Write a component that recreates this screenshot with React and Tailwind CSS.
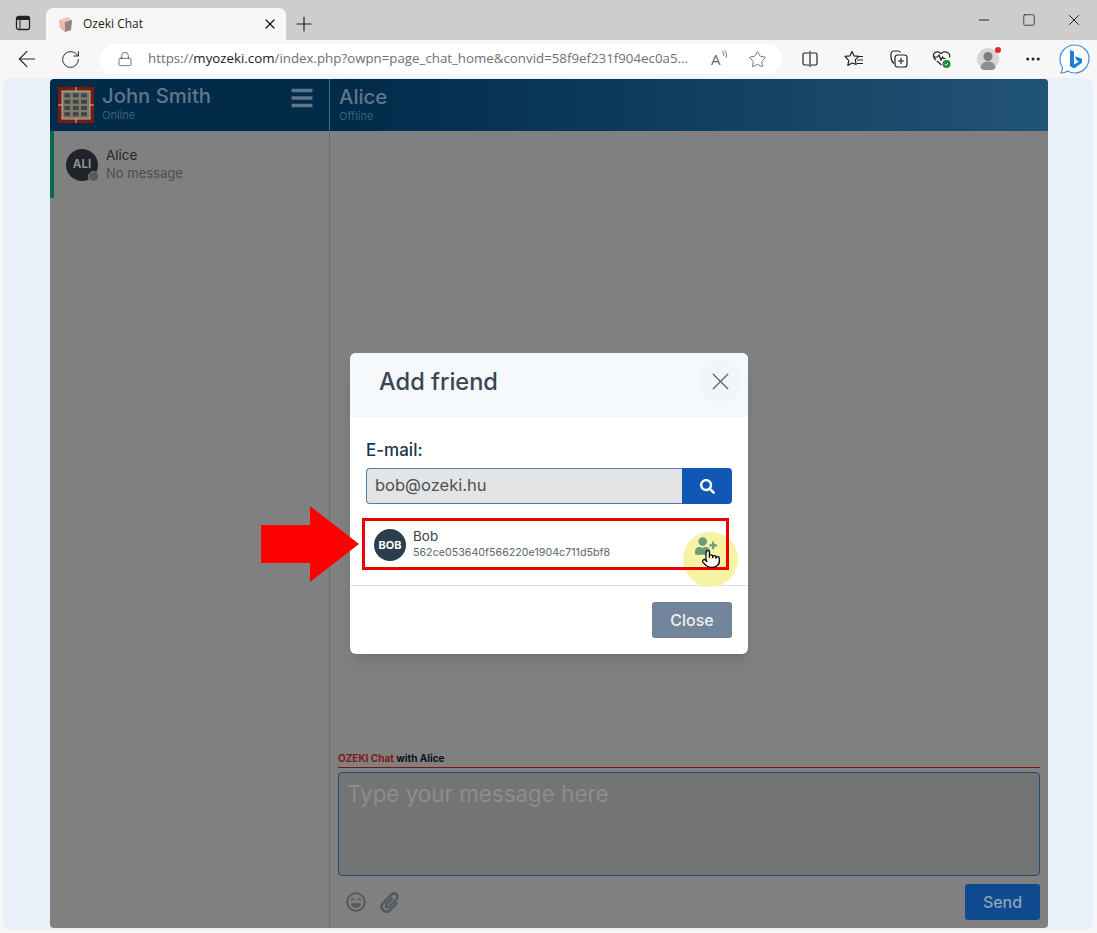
import { ArrowLeft, RotateCw, Lock, Star, Plus, X, Minus, Square, MoreHorizontal, Pointer } from "lucide-react";
import { FaBars, FaSearch, FaUserPlus, FaPaperclip, FaRegLaughBeam } from "react-icons/fa";

// Red keypad logo in the sidebar header
function KeypadLogo() {
  const cells = [0, 1, 2, 3];
  return (
    <svg width="36" height="36" viewBox="0 0 36 36" className="shrink-0">
      <rect width="36" height="36" fill="#7a1a0c" />
      <rect x="4" y="4" width="28" height="28" fill="#7a7a72" stroke="#b5aea5" strokeWidth="1" />
      {cells.map((r) =>
        [0, 1, 2].map((c) => (
          <rect key={`${r}-${c}`} x={6 + c * 8.4} y={6 + r * 6.3} width="6.6" height="4.8" fill="#45453f" stroke="#8f8c84" strokeWidth="0.5" />
        ))
      )}
      <path d="M18 0v4M18 32v4M0 18h4M32 18h4" stroke="#d8b8a8" strokeWidth="1" />
    </svg>
  );
}

function TabActionsIcon() {
  return (
    <svg width="16" height="16" viewBox="0 0 16 16" className="mb-[9px]" fill="none" stroke="#222" strokeWidth="1.300">
      <rect x="1.500" y="1.500" width="13" height="13" rx="2" />
      <path d="M1.500 3.500h13" strokeWidth="3" />
      <path d="M5 3v11" strokeWidth="1" />
    </svg>
  );
}

function TabIcon() {
  return (
    <svg width="17" height="17" viewBox="0 0 17 17">
      <path d="M2 4l9-3 4 3-1 10-6 2-5-4z" fill="#e8c9c4" />
      <path d="M8 6l7-2-1 10-6 2z" fill="#8f8580" />
      <path d="M2 4l6 2v10l-5-4z" fill="#f2b5a8" />
    </svg>
  );
}

function ReadAloudWaves() {
  return (
    <svg width="6" height="12" viewBox="0 0 6 12" fill="none" stroke="#777" strokeWidth="1" className="-mt-[6px]">
      <path d="M1 1c1.500 1 2 3 1.500 5M3.500 0c2 2 2.500 5 1.500 8" />
    </svg>
  );
}

function SplitIcon() {
  return (
    <svg width="18" height="18" viewBox="0 0 18 18" fill="none" stroke="#222" strokeWidth="1.2">
      <path d="M8 3H3.500A1.500 1.500 0 0 0 2 4.500v9A1.500 1.500 0 0 0 3.500 15H8M10 3h4.500A1.500 1.500 0 0 1 16 4.500v9a1.500 1.500 0 0 1-1.500 1.500H10M9 1v16" />
    </svg>
  );
}

function FavoritesIcon() {
  return (
    <svg width="20" height="18" viewBox="0 0 20 18" fill="none" stroke="#222" strokeWidth="1.2" strokeLinejoin="round">
      <path d="M8 1.500l2 4.400 4.800.5-3.600 3.200 1 4.800L8 13l-4.200 2.400 1-4.800L1 6.400l4.800-.5z" />
      <path d="M14 6.500h5M13 10h6M13 13.500h6" />
    </svg>
  );
}

function CollectionsIcon() {
  return (
    <svg width="20" height="20" viewBox="0 0 20 20" fill="none" stroke="#222" strokeWidth="1.2">
      <path d="M5 14.500C3 13 2 11 2 8V5a3 3 0 0 1 3-3h4a3 3 0 0 1 2.500 1.500" />
      <rect x="6" y="6" width="12" height="12" rx="2.500" />
      <path d="M12 9v6M9 12h6" />
    </svg>
  );
}

function HealthIcon() {
  return (
    <svg width="20" height="20" viewBox="0 0 20 20" className="-ml-[2px]">
      <path d="M4 11C1.500 9 1 7.500 1.500 5.500 2.500 2.500 6.500 2 9 4.500c2.500-2.500 7-2 8.500 1 .4 1 .4 2 0 3M1.500 8h4l1.500-2 2 5 1.500-3 1 1.500h2M5 12l4.500 4" fill="none" stroke="#222" strokeWidth="1.200" />
      <circle cx="14.500" cy="15" r="4" fill="#1e8a3c" />
      <path d="M12.800 15l1.200 1.200 2-2.200" fill="none" stroke="#fff" strokeWidth="1" />
    </svg>
  );
}

function ProfileIcon() {
  return (
    <div className="relative w-[22px] h-[22px]">
      <svg width="22" height="22" viewBox="0 0 22 22">
        <circle cx="11" cy="11" r="11" fill="#d6d6d6" />
        <circle cx="11" cy="8.500" r="4.500" fill="#7d7d7d" />
        <path d="M3.500 20c.5-4.500 3.500-6.500 7.500-6.500s7 2 7.500 6.500a11 11 0 0 1-15 0z" fill="#8e8e8e" />
      </svg>
      <span className="absolute -top-[1px] right-[-2px] w-[6px] h-[6px] rounded-full bg-[#e8262a]" />
    </div>
  );
}

function BingIcon() {
  return (
    <svg width="31" height="31" viewBox="0 0 31 31">
      <path d="M15.500 1C7.500 1 1 7.500 1 15.500c0 3.500 1 6 2.500 8 .3 1.500-.3 3.500-1.500 5.500 3 0 5-.8 6.500-2 2.200 1.300 4.700 2 7.500 2C23.500 29 30 22.500 30 14.500 30 7 23.500 1 15.500 1z" fill="#fff" stroke="#3f8fd8" strokeWidth="1.200" />
      <path d="M11 6l4 1.500v13l5-3-2.500-1.200-1.500-4 7 2.500v4L15 24.500l-4-2.500z" fill="#1b7fd6" />
    </svg>
  );
}

function Sidebar() {
  return (
    <aside className="w-[280px] shrink-0 flex flex-col border-r border-[#6e6e6e]">
      <div className="h-[52px] bg-[#022a49] flex items-center pl-[8px] pr-[16px] border-r border-[#4a6a80] -mr-px">
        <KeypadLogo />
        <div className="ml-[8px] flex-1 -mt-[6px]">
          <div className="text-[20.300px] leading-[26px] font-medium text-[#5f7789]">John Smith</div>
          <div className="text-[11px] leading-[13px] text-[#3e6078]">Online</div>
        </div>
        <FaBars className="text-[#5f7789] w-[22px] h-[24px] -mt-[14px]" />
      </div>
      <div className="h-[67px] bg-[#808080] border-l-[4px] border-[#0a6a4a] flex items-center pl-[12px]">
        <div className="relative w-[32px] h-[32px] rounded-full bg-[#20242a] flex items-center justify-center shrink-0">
          <span className="text-[11.500px] font-bold text-[#8b9096]">ALI</span>
          <span className="absolute right-[-1px] bottom-[-1px] w-[11px] h-[11px] rounded-full bg-[#555a61] border border-[#808080]" />
        </div>
        <div className="ml-[8px] -mt-[2px]">
          <div className="text-[13.500px] leading-[18px] text-[#24262a]">Alice</div>
          <div className="text-[13px] leading-[18px] text-[#4a4d52]">No message</div>
        </div>
      </div>
      <div className="flex-1 bg-[#808080]" />
    </aside>
  );
}

function ChatPane() {
  return (
    <main className="flex-1 flex flex-col min-w-0 bg-[#808080]">
      <div className="h-[52px] bg-gradient-to-r from-[#022a49] to-[#225475] pl-[9px] pt-[5px]">
        <div className="text-[20.300px] leading-[26px] font-medium text-[#5f7789]">Alice</div>
        <div className="text-[11px] leading-[13px] text-[#3e6078]">Offline</div>
      </div>
      <div className="flex-1" />
      <div className="px-[8px] pb-[8px]">
        <div className="text-[10px] leading-[13px] font-bold border-b border-[#7a1510] pb-[2px]">
          <span className="text-[#7c1a14]">OZEKI Chat</span> <span className="text-[#111]">with Alice</span>
        </div>
        <div className="mt-[4px] h-[104px] rounded-[4px] border border-[#1f4a75] bg-[#747474] px-[8px] py-[4px] text-[22.400px] leading-[34px] text-[#8b8d8e]">
          Type your message here
        </div>
        <div className="mt-[8px] flex items-center justify-between">
          <div className="flex items-center gap-[14px] pl-[8px] text-[#55595e]">
            <FaRegLaughBeam className="w-[20px] h-[20px]" />
            <FaPaperclip className="w-[19px] h-[21px]" />
          </div>
          <button className="w-[75px] h-[36px] rounded-[3px] bg-[#0f4a8f] text-[16px] font-medium text-[#8ea3b8]">Send</button>
        </div>
      </div>
    </main>
  );
}

function AddFriendModal() {
  return (
    <div className="absolute inset-0 flex items-center justify-center">
      <div className="relative w-[398px] h-[301px] rounded-[6px] bg-white shadow-lg flex flex-col">
        <div className="h-[64px] bg-[#f6f9fc] rounded-t-[6px] flex items-center justify-between pl-[29px] pr-[6px]">
          <span className="text-[23.600px] font-medium text-[#3a4654] -mt-[6px]">Add friend</span>
          <div className="w-[44px] h-[44px] rounded-full bg-[#f3f6f9] flex items-center justify-center -mt-[8px]">
            <X className="w-[29px] h-[29px] text-[#5a6570]" strokeWidth={1.100} />
          </div>
        </div>
        <div className="flex-1 px-[16px] pt-[21px]">
          <div className="text-[17px] leading-[24px] font-medium text-[#1f3349]">E-mail:</div>
          <div className="mt-[6px] flex h-[36px]">
            <div className="flex-1 rounded-l-[4px] border border-[#4f7ea8] border-r-0 bg-[#e4e4e4] pl-[8px] text-[16.500px] leading-[32px] text-[#4c5157]">bob@ozeki.hu</div>
            <div className="w-[50px] rounded-r-[4px] bg-[#1158b4] flex items-center justify-center">
              <FaSearch className="w-[15px] h-[15px] text-white" />
            </div>
          </div>
          <div className="mt-[14px] flex items-center pl-[8px] h-[54px]">
            <div className="w-[32px] h-[32px] rounded-full bg-[#2e3d4d] flex items-center justify-center text-[11px] font-bold text-white">BOB</div>
            <div className="ml-[7px] -mt-[2px]">
              <div className="text-[13.500px] leading-[17px] text-[#3a4048]">Bob</div>
              <div className="text-[10.700px] leading-[16px] text-[#5d6670]">562ce053640f566220e1904c711d5bf8</div>
            </div>
          </div>
        </div>
        <div className="h-[69px] border-t border-[#dfe3e7] flex items-center justify-end pr-[16px]">
          <button className="w-[80px] h-[36px] rounded-[3px] bg-[#72859b] text-[16px] font-medium text-[#eef1f4]">Close</button>
        </div>

        {/* yellow cursor highlight, red annotation box and arrow */}
        <div className="absolute left-[333px] top-[179px] w-[55px] h-[55px] rounded-full bg-[#f6f3a4]" />
        <div className="absolute left-[12px] top-[165px] w-[367px] h-[52px] border-[3px] border-[#ee0000]" />
        <FaUserPlus className="absolute left-[345px] top-[184px] w-[22px] h-[18px] text-[#6b9b78]" />
        <Pointer className="absolute left-[351px] top-[195px] w-[20px] h-[22px] text-black" fill="#fff" strokeWidth={1.500} />
        <svg className="absolute left-[-89px] top-[153px]" width="99" height="76" viewBox="0 0 99 76">
          <path d="M0 19h49V0l49 38-49 38V57H0z" fill="#fe0000" />
        </svg>
      </div>
    </div>
  );
}

export default function App() {
  return (
    <div className="w-[1097px] h-[933px] overflow-hidden flex flex-col font-['Inter',sans-serif]">
      {/* browser tab strip */}
      <div className="h-[40px] bg-[#cdcdcd] flex items-end pl-[15px] font-['Open_Sans',sans-serif]">
        <TabActionsIcon />
        <div className="ml-[15px] w-[240px] h-[32px] bg-[#f7f7f7] rounded-t-[7px] flex items-center pl-[11px] pr-[8px]">
          <TabIcon />
          <span className="ml-[9px] flex-1 text-[12px] text-[#222]">Ozeki Chat</span>
          <X className="w-[16px] h-[16px] text-[#111]" strokeWidth={1.800} />
        </div>
        <Plus className="ml-[6px] mb-[4px] w-[24px] h-[24px] text-[#222]" strokeWidth={1.200} />
        <div className="flex-1" />
        <Minus className="mb-[12px] w-[16px] h-[16px] text-[#222]" strokeWidth={1.500} />
        <Square className="ml-[30px] mb-[13px] w-[14px] h-[14px] text-[#222]" strokeWidth={1.300} />
        <X className="ml-[29px] mb-[11px] mr-[14px] w-[18px] h-[18px] text-[#222]" strokeWidth={1.300} />
      </div>

      {/* browser toolbar */}
      <div className="h-[38px] bg-[#f7f7f7] flex items-center pl-[14px] font-['Open_Sans',sans-serif]">
        <ArrowLeft className="w-[26px] h-[26px] text-[#222]" strokeWidth={1} />
        <RotateCw className="ml-[20px] w-[21px] h-[21px] text-[#222]" strokeWidth={1.100} />
        <div className="ml-[19px] w-[682px] h-[30px] bg-white rounded-full flex items-center pl-[17px] pr-[13px]">
          <Lock className="w-[16px] h-[16px] text-[#444]" strokeWidth={1.100} />
          <span className="ml-[15px] w-[546px] text-[13.300px] text-[#6f6f6f] whitespace-nowrap">
            https://<span className="text-[#1a1a1a]">myozeki.com</span>/index.php?owpn=page_chat_home&convid=58f9ef231f904ec0a5...
          </span>
          <span className="ml-[17px] text-[15px] text-[#666]">A</span>
          <ReadAloudWaves />
          <Star className="ml-[21px] w-[19px] h-[19px] text-[#666]" strokeWidth={1.100} />
        </div>
        <div className="ml-[19px] flex items-center gap-[25px]">
          <SplitIcon />
          <FavoritesIcon />
          <CollectionsIcon />
          <HealthIcon />
          <ProfileIcon />
          <MoreHorizontal className="w-[18px] h-[18px] text-[#222]" />
        </div>
        <div className="ml-[17px]"><BingIcon /></div>
      </div>

      {/* page */}
      <div className="flex-1 bg-[#f7f7f7] pl-[3px] pr-[4px] pb-[3px]">
        <div className="h-full bg-[#eaf0fa] rounded-[8px] pt-[1px] pl-[47px] pb-[2px]">
          <div className="relative w-[998px] h-full flex rounded-[4px] overflow-hidden">
            <Sidebar />
            <ChatPane />
            <AddFriendModal />
          </div>
        </div>
      </div>
    </div>
  );
}
